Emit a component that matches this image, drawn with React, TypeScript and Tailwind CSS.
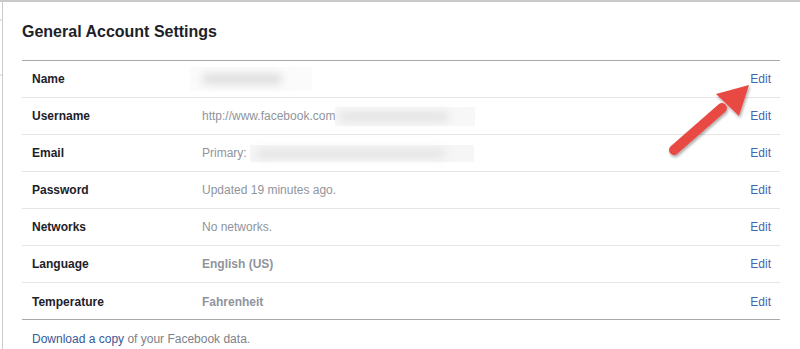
import React from "react";

const rows: { label: string; value: React.ReactNode; bold?: boolean }[] = [
  {
    label: "Name",
    value: (
      <span className="relative -ml-[12px] inline-block h-[24px] w-[122px] bg-[#fbfbfb] align-middle">
        <span className="absolute left-[12px] top-[7px] h-[10px] w-[80px] rounded-full bg-[#dcdcdc] blur-[4px]" />
      </span>
    ),
  },
  {
    label: "Username",
    value: (
      <span className="inline-flex items-center">
        <span>http://www.facebook.com</span>
        <span className="relative inline-block h-[19px] w-[140px] bg-[#f7f7f7]">
          <span className="absolute left-[4px] top-[5px] h-[9px] w-[110px] rounded-full bg-[#e2e2e2] blur-[4px]" />
        </span>
      </span>
    ),
  },
  {
    label: "Email",
    value: (
      <span className="inline-flex items-center">
        <span>Primary:&nbsp;</span>
        <span className="relative inline-block h-[17px] w-[224px] bg-[#f6f6f6]">
          <span className="absolute left-[6px] top-[4px] h-[9px] w-[190px] rounded-full bg-[#e4e4e4] blur-[4px]" />
        </span>
      </span>
    ),
  },
  { label: "Password", value: "Updated 19 minutes ago." },
  { label: "Networks", value: "No networks." },
  { label: "Language", value: "English (US)", bold: true },
  { label: "Temperature", value: "Fahrenheit", bold: true },
];

export default function App() {
  return (
    <div
      className="relative h-[349px] w-[800px] overflow-hidden bg-white border-t-2 border-[#c9c9c9]"
      style={{ fontFamily: '"Liberation Sans", Arial, Helvetica, sans-serif' }}
    >
      <div className="absolute left-[2px] top-0 h-full w-px bg-[#cccccc]" />
      <div className="absolute left-0 top-[17px] h-[2px] w-[2px] bg-[#e5e5e5]" />
      <div className="absolute left-0 top-[72px] h-[2px] w-[2px] bg-[#e5e5e5]" />
      <div className="pl-[22px] pr-[20px]">
        <h1 className="pt-[20px] text-[16px] font-bold leading-[20px] text-[#1d2129]">
          General Account Settings
        </h1>
        <div className="mt-[18px] border-t border-[#a9a9a9]">
          {rows.map((r, i) => (
            <div
              key={r.label}
              className={
                "flex h-[37px] items-center text-[12px] " +
                (i < rows.length - 1 ? "border-b border-[#e5e5e5]" : "")
              }
            >
              <div className="w-[180px] pl-[10px] font-bold text-[#1d2129]">{r.label}</div>
              <div
                className={
                  "flex-1 text-[#90949c] " + (r.bold ? "font-bold" : "")
                }
              >
                {r.value}
              </div>
              <div className="pr-[9px] text-[#4267b2]">Edit</div>
            </div>
          ))}
        </div>
        <div className="-mt-px border-t border-[#a9a9a9] pl-[10px] pt-[10px] text-[12px]">
          <span className="text-[#365899]">Download a copy</span>
          <span className="text-[#7d818c]"> of your Facebook data.</span>
        </div>
      </div>
      <svg
        className="absolute left-0 top-0"
        width="800"
        height="349"
        viewBox="0 0 800 349"
      >
        <defs>
          <filter id="sh" x="-20%" y="-20%" width="140%" height="140%">
            <feDropShadow dx="1" dy="2" stdDeviation="1.5" floodColor="#000" floodOpacity="0.35" />
          </filter>
        </defs>
        <g filter="url(#sh)">
          <line
            x1="674"
            y1="148"
            x2="722"
            y2="106"
            stroke="#e84a43"
            strokeWidth="10"
            strokeLinecap="round"
          />
          <polygon points="749,83 716,92 739,114" fill="#e84a43" />
        </g>
      </svg>
    </div>
  );
}
